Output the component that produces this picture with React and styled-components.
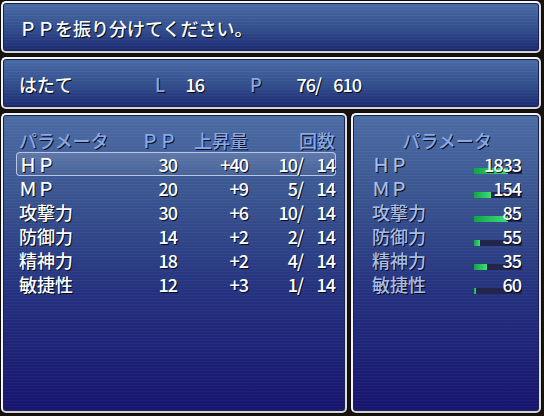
import React from "react";
import styled, { createGlobalStyle } from "styled-components";

const GlobalStyle = createGlobalStyle`
  html, body { margin: 0; padding: 0; background: #17120c; }
  body { font-family: "Noto Sans CJK JP", "Noto Sans", sans-serif; }
  * { box-sizing: border-box; }
`;

const Screen = styled.div`
  width: 544px;
  height: 416px;
  display: grid;
  grid-template-columns: 350px 194px;
  grid-template-rows: 56px 56px 304px;
  background: #17120c;
  overflow: hidden;
`;

const Slot = styled.div`
  padding: 1px 3px 3px 1px;
  grid-column: ${(p) => (p.$wide ? "1 / 3" : "auto")};
`;

const Frame = styled.div`
  height: 100%;
  border: 2px solid #f4f4f6;
  border-right-color: #dcdce4;
  border-bottom-color: #d4d4dc;
  border-radius: 5px;
  box-shadow: 0 0 0 1px #0c0c0c, inset 0 0 0 1px #1a2248;
  background:
    repeating-linear-gradient(to bottom, rgba(255, 255, 255, 0.035) 0 1px, rgba(0, 0, 0, 0) 1px 3px),
    ${(p) =>
      p.$tall
        ? "linear-gradient(to bottom, #4c6ca4 0%, #39548f 28%, #25337f 58%, #16146e 100%)"
        : "linear-gradient(to bottom, #4a6ca6 0%, #33508e 50%, #1c2a72 100%)"};
  padding: ${(p) => p.$pad};
  font-size: 18px;
  font-weight: 500;
  line-height: 24px;
  color: #ffffff;
  text-shadow: 1px 1px 0 rgba(0, 0, 0, 0.9);
  overflow: hidden;
`;

const HelpText = styled.div`
  height: 24px;
  white-space: pre;
`;

const StatusLine = styled.div`
  display: grid;
  grid-template-columns: 136px 30px 19px 46px 30px 41px 40px;
  height: 24px;
`;

const Cell = styled.span`
  display: block;
  text-align: ${(p) => p.$align || "left"};
  color: ${(p) => p.$color || "#ffffff"};
  letter-spacing: ${(p) => (p.$num ? "-1px" : "0")};
  white-space: pre;
  grid-column: ${(p) => p.$span || "auto"};
`;

const Table = styled.div`
  width: 320px;
  display: flex;
  flex-direction: column;
`;

const Row = styled.div`
  display: grid;
  grid-template-columns: 118px 40px 71px 55px 32px;
  height: 24px;
  padding-left: 2px;
  border: 1px solid ${(p) => (p.$selected ? "rgba(196, 208, 236, 0.9)" : "transparent")};
  border-radius: 4px;
  background: ${(p) =>
    p.$selected
      ? "linear-gradient(to bottom, rgba(255,255,255,0.14), rgba(255,255,255,0.05))"
      : "transparent"};
  line-height: 22px;
`;

const Side = styled.div`
  width: 150px;
  display: flex;
  flex-direction: column;
`;

const SideHeader = styled.div`
  height: 24px;
  text-align: center;
  color: #8aa8e6;
`;

const SideRow = styled.div`
  display: grid;
  grid-template-columns: 1fr 48px;
  height: 24px;
`;

const GaugeCell = styled.div`
  position: relative;
  height: 24px;
`;

const GaugeTrack = styled.div`
  position: absolute;
  left: 0;
  right: 0;
  top: 16px;
  height: 6px;
  background: #23264c;
`;

const GaugeFill = styled.div`
  height: 100%;
  background: linear-gradient(to right, #12a444, #3ee07c);
`;

const Value = styled.span`
  position: relative;
  display: block;
  text-align: right;
  padding-right: 1px;
  letter-spacing: -1px;
`;

const params = [
  { name: "ＨＰ", pp: 30, up: "+40", used: 10, max: 14, val: 1833, rate: 0.7 },
  { name: "ＭＰ", pp: 20, up: "+9", used: 5, max: 14, val: 154, rate: 0.35 },
  { name: "攻撃力", pp: 30, up: "+6", used: 10, max: 14, val: 85, rate: 0.7 },
  { name: "防御力", pp: 14, up: "+2", used: 2, max: 14, val: 55, rate: 0.13 },
  { name: "精神力", pp: 18, up: "+2", used: 4, max: 14, val: 35, rate: 0.27 },
  { name: "敏捷性", pp: 12, up: "+3", used: 1, max: 14, val: 60, rate: 0.05 },
];

const SYS = "#88a8e8";
const LABEL = "#a6bcea";

export default function App() {
  return (
    <>
      <GlobalStyle />
      <Screen>
        <Slot $wide>
          <Frame $pad="13px 16px 0 16px">
            <HelpText>ＰＰを振り分けてください。</HelpText>
          </Frame>
        </Slot>
        <Slot $wide>
          <Frame $pad="13px 16px 0 16px">
            <StatusLine>
              <Cell>はたて</Cell>
              <Cell $color={SYS}>L</Cell>
              <Cell $align="right" $num>16</Cell>
              <span />
              <Cell $color={SYS}>P</Cell>
              <Cell $align="right" $num>76/</Cell>
              <Cell $align="right" $num>610</Cell>
            </StatusLine>
          </Frame>
        </Slot>
        <Slot>
          <Frame $tall $pad="13px 0 0 13px">
            <Table>
              <Row>
                <Cell $color={SYS}>パラメータ</Cell>
                <Cell $color={SYS} $align="right">ＰＰ</Cell>
                <Cell $color={SYS} $align="right">上昇量</Cell>
                <Cell $color={SYS} $align="right" $span="4 / 6">回数</Cell>
              </Row>
              {params.map((p, i) => (
                <Row key={p.name} $selected={i === 0}>
                  <Cell>{p.name}</Cell>
                  <Cell $align="right" $num>{p.pp}</Cell>
                  <Cell $align="right" $num>{p.up}</Cell>
                  <Cell $align="right" $num>{`${p.used}/`}</Cell>
                  <Cell $align="right" $num>{p.max}</Cell>
                </Row>
              ))}
            </Table>
          </Frame>
        </Slot>
        <Slot>
          <Frame $tall $pad="13px 0 0 19px">
            <Side>
              <SideHeader>パラメータ</SideHeader>
              {params.map((p) => (
                <SideRow key={p.name}>
                  <Cell $color={LABEL}>{p.name}</Cell>
                  <GaugeCell>
                    <GaugeTrack>
                      <GaugeFill style={{ width: `${p.rate * 100}%` }} />
                    </GaugeTrack>
                    <Value>{p.val}</Value>
                  </GaugeCell>
                </SideRow>
              ))}
            </Side>
          </Frame>
        </Slot>
      </Screen>
    </>
  );
}
